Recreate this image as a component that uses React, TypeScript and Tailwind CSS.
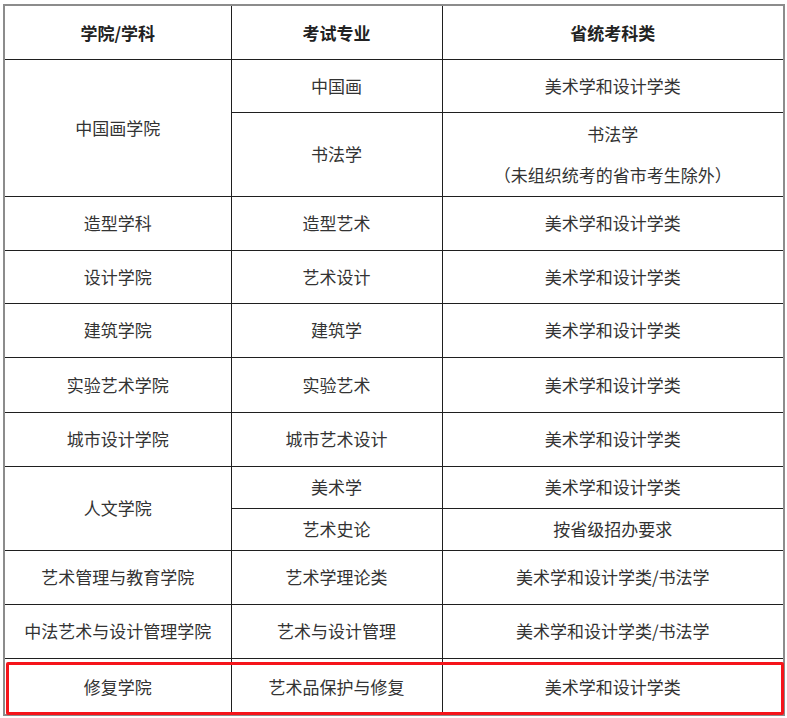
const font = { fontFamily: '"Noto Sans CJK SC", "Noto Sans", sans-serif' };

const td = "border border-[#1f1f1f] text-center align-middle p-0";

const simpleRows = [
  { h: "h-[54px]", a: "造型学科", b: "造型艺术", c: "美术学和设计学类" },
  { h: "h-[53px]", a: "设计学院", b: "艺术设计", c: "美术学和设计学类" },
  { h: "h-[54px]", a: "建筑学院", b: "建筑学", c: "美术学和设计学类" },
  { h: "h-[55px]", a: "实验艺术学院", b: "实验艺术", c: "美术学和设计学类" },
  { h: "h-[54px]", a: "城市设计学院", b: "城市艺术设计", c: "美术学和设计学类" },
];

const tailRows = [
  { h: "h-[54px]", a: "艺术管理与教育学院", b: "艺术学理论类", c: "美术学和设计学类/书法学" },
  { h: "h-[54px]", a: "中法艺术与设计管理学院", b: "艺术与设计管理", c: "美术学和设计学类/书法学" },
  { h: "h-[57px]", a: "修复学院", b: "艺术品保护与修复", c: "美术学和设计学类" },
];

export default function App() {
  return (
    <div className="w-[787px] h-[718px] bg-white pt-[4px] pl-[3px]" style={font}>
      <div className="relative w-[780px]">
        <table className="w-[780px] table-fixed border-collapse border-2 border-[#8c8c8c] text-[17px] text-[#333]">
          <colgroup>
            <col className="w-[227px]" />
            <col className="w-[211px]" />
            <col className="w-[342px]" />
          </colgroup>
          <tbody>
            <tr className="h-[54px] font-bold text-[#222]">
              <td className={td}>学院/学科</td>
              <td className={td}>考试专业</td>
              <td className={td}>省统考科类</td>
            </tr>
            <tr className="h-[53px]">
              <td className={td} rowSpan={2}>中国画学院</td>
              <td className={td}>中国画</td>
              <td className={td}>美术学和设计学类</td>
            </tr>
            <tr className="h-[84px]">
              <td className={td}>书法学</td>
              <td className={`${td} leading-[41px]`}>
                <div>书法学</div>
                <div>（未组织统考的省市考生除外）</div>
              </td>
            </tr>
            {simpleRows.map((r) => (
              <tr key={r.a} className={r.h}>
                <td className={td}>{r.a}</td>
                <td className={td}>{r.b}</td>
                <td className={td}>{r.c}</td>
              </tr>
            ))}
            <tr className="h-[42px]">
              <td className={td} rowSpan={2}>人文学院</td>
              <td className={td}>美术学</td>
              <td className={td}>美术学和设计学类</td>
            </tr>
            <tr className="h-[42px]">
              <td className={td}>艺术史论</td>
              <td className={td}>按省级招办要求</td>
            </tr>
            {tailRows.map((r) => (
              <tr key={r.a} className={r.h}>
                <td className={td}>{r.a}</td>
                <td className={td}>{r.b}</td>
                <td className={td}>{r.c}</td>
              </tr>
            ))}
          </tbody>
        </table>
        {/* highlight box round the last row */}
        <div className="pointer-events-none absolute left-[3px] right-[-1px] bottom-[1px] h-[53px] rounded-[2px] border-[3px] border-[#f5141a]" />
      </div>
    </div>
  );
}
